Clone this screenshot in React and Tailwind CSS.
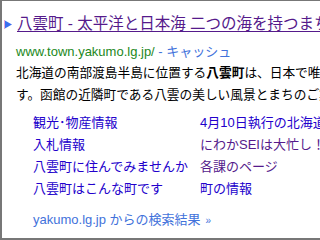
const jp = { fontFamily: '"Liberation Sans", "Noto Sans CJK JP", sans-serif' };

const sitelinks = [
  ['観光･物産情報', false, '4月10日執行の北海道知事選挙', false],
  ['入札情報', false, 'にわかSEIは大忙し！', true],
  ['八雲町に住んでみませんか', false, '各課のページ', true],
  ['八雲町はこんな町です', false, '町の情報', false],
];

export default function App() {
  return (
    <div
      className="w-[320px] h-[240px] bg-white border-l-2 border-t border-b-2 border-[#777] overflow-hidden whitespace-nowrap flex flex-col"
      style={jp}
    >
      {/* title */}
      <div className="h-[20px] mt-[13px] flex items-center">
        <svg className="ml-[2px] mr-[5px] shrink-0" width="8" height="9" viewBox="0 0 8 9">
          <polygon points="0,0 8,4.5 0,9" fill="#3b6ff0" />
          <rect x="0" y="0" width="1" height="9" fill="#e6a4d8" />
        </svg>
        <a className="text-[15.5px] leading-[20px] text-[#551a8b] underline underline-offset-2">
          八雲町 - 太平洋と日本海 二つの海を持つまち 八雲町
        </a>
      </div>

      {/* url */}
      <div className="h-[14px] mt-[11px] pl-[14px] flex items-center text-[13px]">
        <span className="text-[#228822]">www.town.yakumo.lg.jp/</span>
        <span className="text-[#4272db]">&nbsp;- キャッシュ</span>
      </div>

      {/* snippet */}
      <div className="mt-[3px] pl-[14px] text-[12.7px] leading-[22px] text-black">
        <div>北海道の南部渡島半島に位置する<b>八雲町</b>は、日本で唯一太平洋と日本海</div>
        <div>す。函館の近隣町である八雲の美しい風景とまちのご案内をしています。</div>
      </div>

      {/* sitelinks */}
      <div className="mt-[6px] pl-[31px] grid grid-cols-[167px_auto] text-[13px] leading-[22px]">
        {sitelinks.map(([a, av, b, bv]) => (
          <>
            <div key={a} className={av ? 'text-[#551a8b]' : 'text-[#2200cc]'}>{a}</div>
            <div key={b} className={bv ? 'text-[#551a8b]' : 'text-[#2200cc]'}>{b}</div>
          </>
        ))}
      </div>

      {/* more results */}
      <div className="h-[14px] mt-[13px] pl-[31px] flex items-center text-[13px] text-[#4272db]">
        yakumo.lg.jp からの検索結果
        <span className="ml-[5px] text-[10px]">»</span>
      </div>
    </div>
  );
}
